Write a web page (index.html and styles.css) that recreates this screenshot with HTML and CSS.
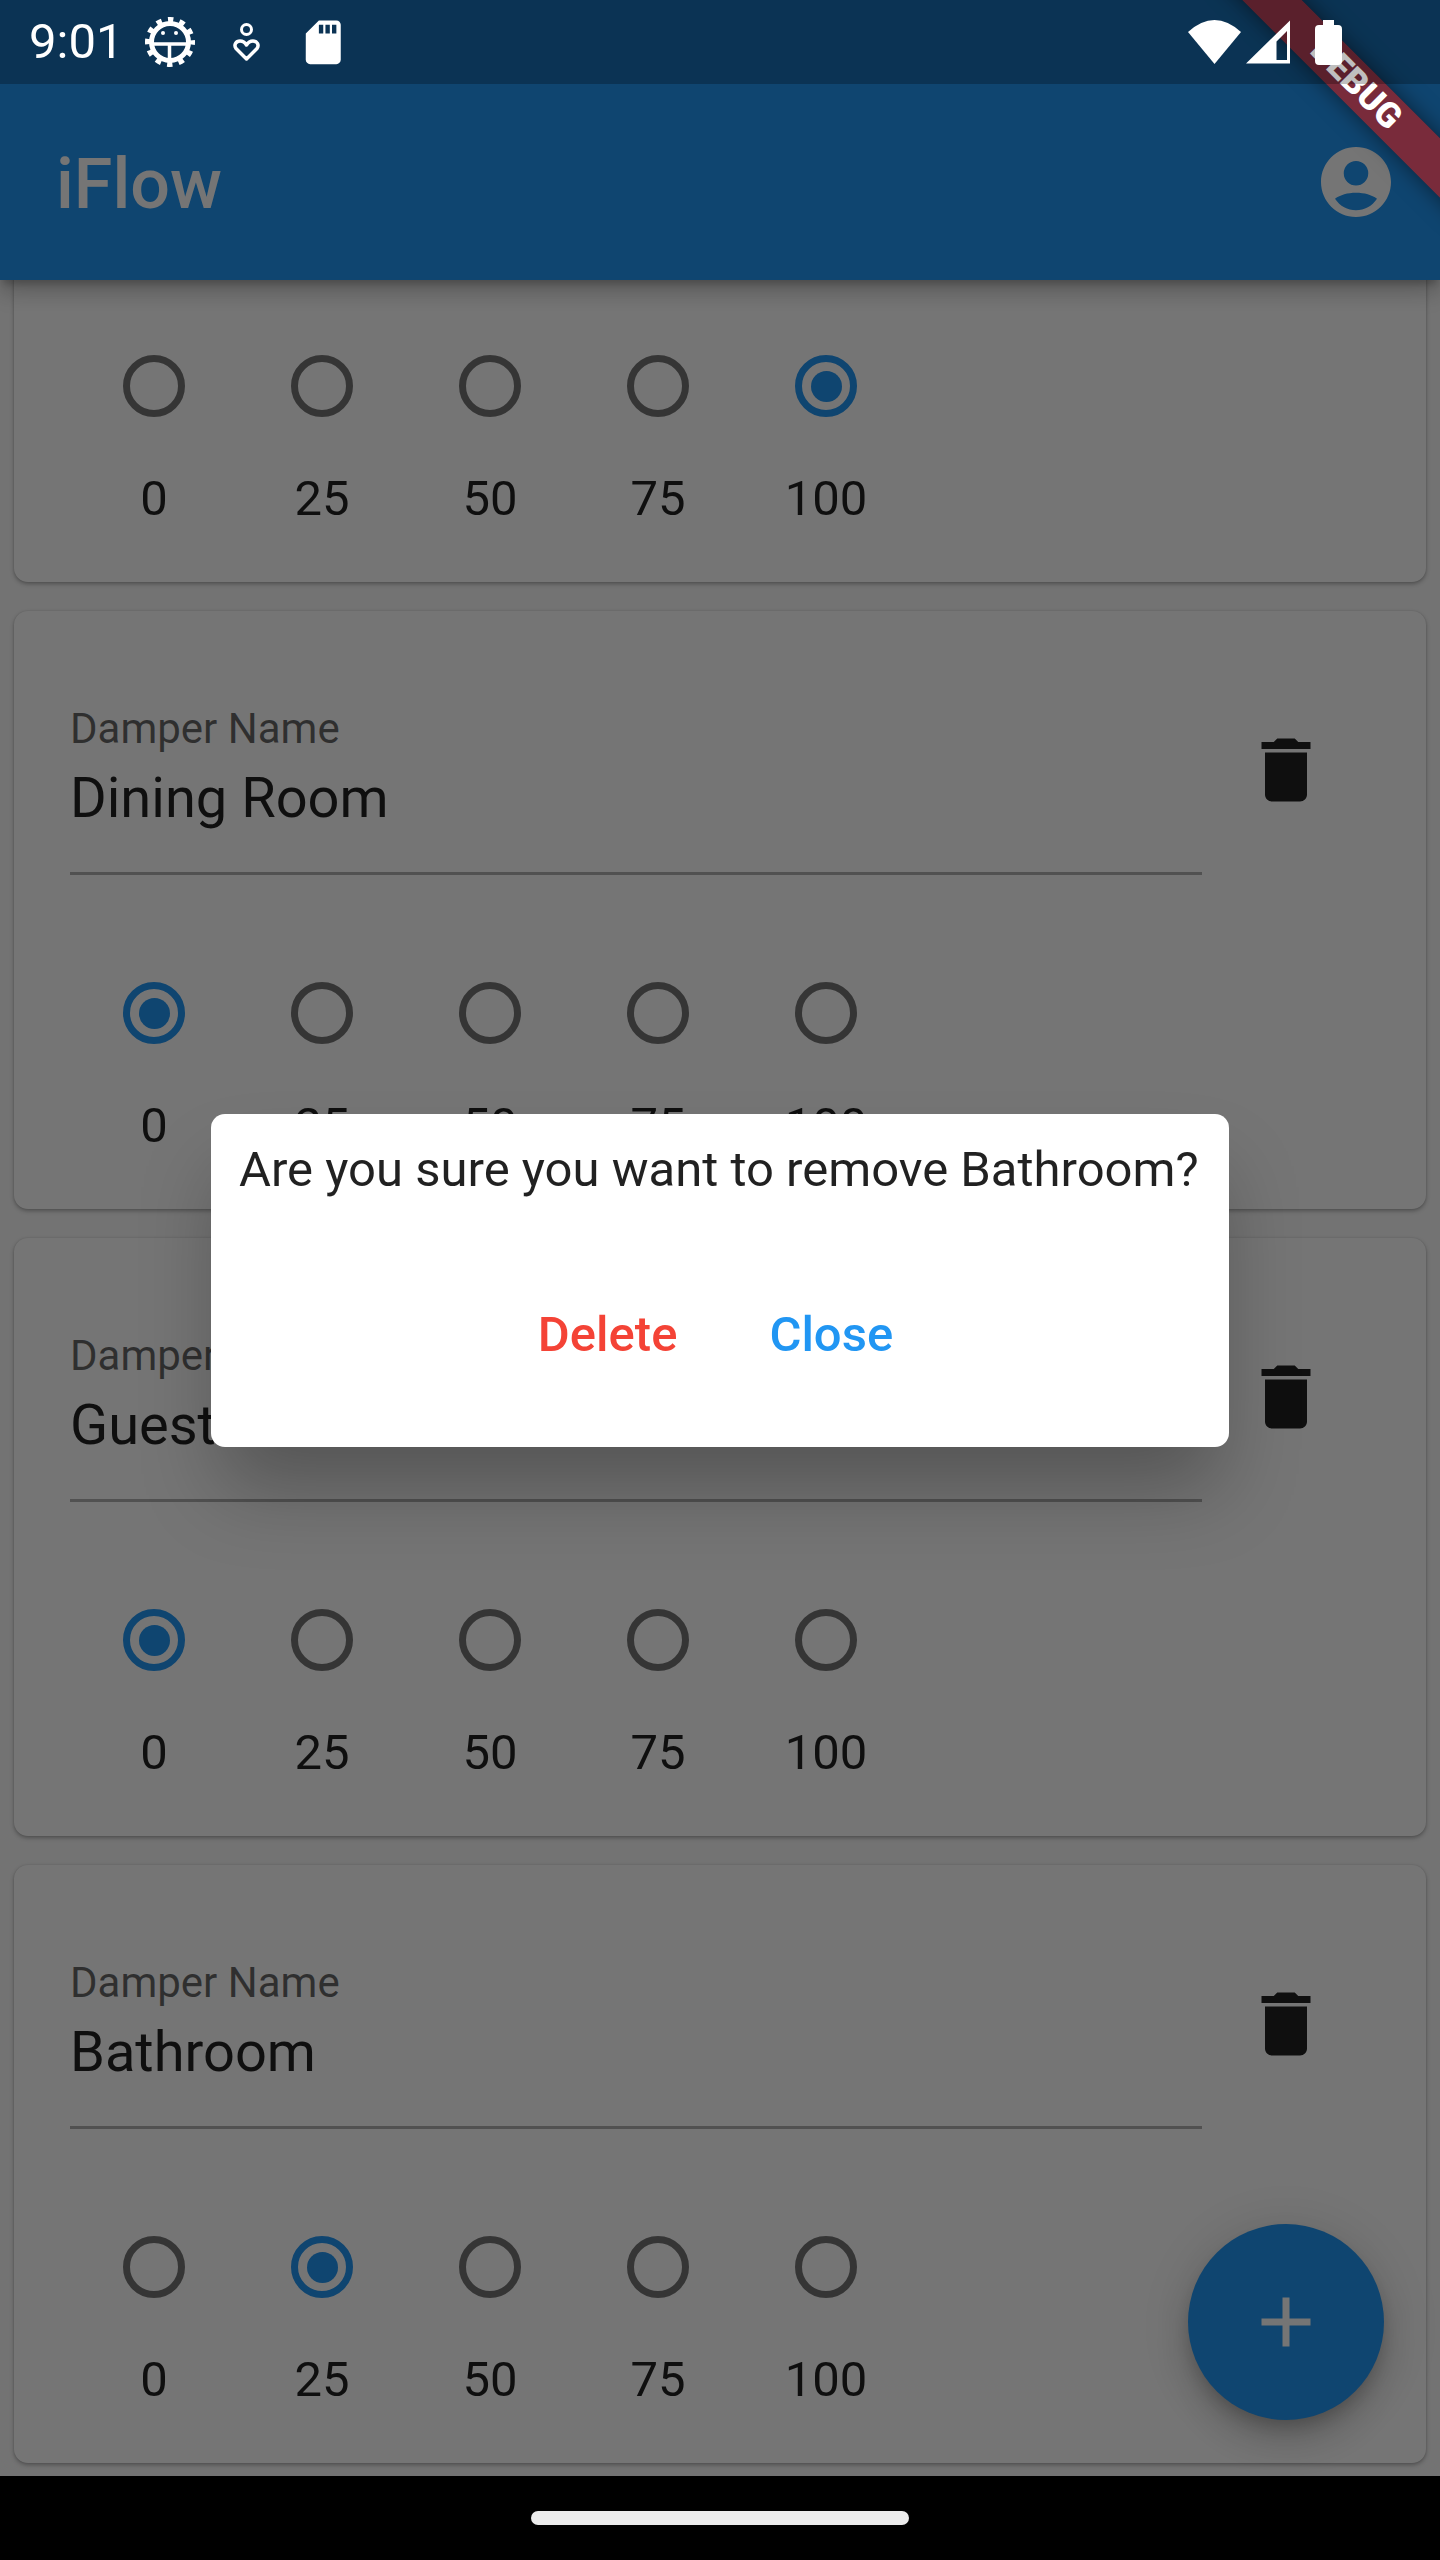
FILE: index.html
```html
<!DOCTYPE html>
<html lang="en">

<head>
    <meta charset="UTF-8">
    <meta name="viewport" content="width=device-width, initial-scale=1.0">
    <title>iFlow</title>
    <link rel="stylesheet" href="styles.css">
</head>

<body>
    <div class="phone">
        <!-- Status bar -->
        <div class="status-bar">
            <div class="status-left">
                <span class="status-time">9:01</span>
                <svg class="icon-gear" width="50" height="50" viewBox="0 0 50 50">
                    <circle cx="25" cy="25" r="18.5" fill="none" stroke="#fff" stroke-width="5" />
                    <circle cx="25" cy="25" r="22.5" fill="none" stroke="#fff" stroke-width="5" stroke-dasharray="5.5 6.28" stroke-dashoffset="2.75" />
                    <path d="M7 27H43M24.5 27V44" fill="none" stroke="#fff" stroke-width="3.5" />
                    <circle cx="18" cy="16" r="2" fill="#fff" />
                    <circle cx="31" cy="16" r="2" fill="#fff" />
                </svg>
                <svg class="icon-person" width="27" height="38" viewBox="0 0 27 38">
                    <circle cx="13.5" cy="6.5" r="5" fill="none" stroke="#fff" stroke-width="3" />
                    <path d="M13.5 36 3 25.5C.5 22 3 18 7 18 10 18 12 19.5 13.5 22 15 19.5 17 18 20 18 24 18 26.5 22 24 25.5Z" fill="none" stroke="#fff" stroke-width="3.5" stroke-linejoin="round" />
                </svg>
                <svg class="icon-sd" width="52.5" height="52.5" viewBox="0 0 24 24">
                    <path fill="#fff" d="M18 2h-8L4.02 8 4 20c0 1.1.9 2 2 2h12c1.1 0 2-.9 2-2V4c0-1.1-.9-2-2-2zm-6 6h-2V4h2v4zm3 0h-2V4h2v4zm3 0h-2V4h2v4z" />
                </svg>
            </div>
            <div class="status-right">
                <svg width="53" height="44" viewBox="0 0 53 44">
                    <path fill="#fff" d="M26.5 44 0 12Q26.5-12 53 12Z" />
                </svg>
                <svg class="icon-signal" width="44.5" height="44" viewBox="0 0 44.5 44">
                    <path fill="#fff" fill-rule="evenodd" d="M0 43.5 44.5 0V43.5ZM30.5 21.5V40H41V11Z" />
                </svg>
                <svg class="icon-battery" width="27" height="45" viewBox="0 0 27 45">
                    <path fill="#fff" d="M8 0H19V5H23Q27 5 27 9V41Q27 45 23 45H4Q0 45 0 41V9Q0 5 4 5H8Z" />
                </svg>
            </div>
        </div>

        <!-- App bar -->
        <header class="app-bar">
            <h1 class="app-title">iFlow</h1>
            <svg class="icon-account" width="84" height="84" viewBox="0 0 24 24">
                <path fill="#fff" fill-rule="evenodd" d="M12 2C6.48 2 2 6.48 2 12s4.48 10 10 10 10-4.48 10-10S17.52 2 12 2zm0 4a3.5 3.5 0 1 1 0 7 3.5 3.5 0 0 1 0-7zM6 16.8c1.5-1.1 3.6-1.7 6-1.7s4.5.6 6 1.7c-1.4 2.1-3.6 3.3-6 3.3s-4.6-1.2-6-3.3z" />
            </svg>
        </header>

        <!-- Damper list -->
        <main class="damper-list">
            <section class="card card-scrolled">
                <div class="radio-row">
                    <div class="option"><span class="radio"></span><span class="option-label">0</span></div>
                    <div class="option"><span class="radio"></span><span class="option-label">25</span></div>
                    <div class="option"><span class="radio"></span><span class="option-label">50</span></div>
                    <div class="option"><span class="radio"></span><span class="option-label">75</span></div>
                    <div class="option"><span class="radio radio-on"></span><span class="option-label">100</span></div>
                </div>
            </section>

            <section class="card">
                <div class="name-row">
                    <div class="field">
                        <div class="field-label">Damper Name</div>
                        <div class="field-value">Dining Room</div>
                    </div>
                    <svg class="icon-trash" width="84" height="84" viewBox="0 0 24 24">
                        <path d="M6 19c0 1.1.9 2 2 2h8c1.1 0 2-.9 2-2V7H6v12zM19 4h-3.5l-1-1h-5l-1 1H5v2h14V4z" />
                    </svg>
                </div>
                <div class="radio-row">
                    <div class="option"><span class="radio radio-on"></span><span class="option-label">0</span></div>
                    <div class="option"><span class="radio"></span><span class="option-label">25</span></div>
                    <div class="option"><span class="radio"></span><span class="option-label">50</span></div>
                    <div class="option"><span class="radio"></span><span class="option-label">75</span></div>
                    <div class="option"><span class="radio"></span><span class="option-label">100</span></div>
                </div>
            </section>

            <section class="card">
                <div class="name-row">
                    <div class="field">
                        <div class="field-label">Damper Name</div>
                        <div class="field-value">Guest Room</div>
                    </div>
                    <svg class="icon-trash" width="84" height="84" viewBox="0 0 24 24">
                        <path d="M6 19c0 1.1.9 2 2 2h8c1.1 0 2-.9 2-2V7H6v12zM19 4h-3.5l-1-1h-5l-1 1H5v2h14V4z" />
                    </svg>
                </div>
                <div class="radio-row">
                    <div class="option"><span class="radio radio-on"></span><span class="option-label">0</span></div>
                    <div class="option"><span class="radio"></span><span class="option-label">25</span></div>
                    <div class="option"><span class="radio"></span><span class="option-label">50</span></div>
                    <div class="option"><span class="radio"></span><span class="option-label">75</span></div>
                    <div class="option"><span class="radio"></span><span class="option-label">100</span></div>
                </div>
            </section>

            <section class="card">
                <div class="name-row">
                    <div class="field">
                        <div class="field-label">Damper Name</div>
                        <div class="field-value">Bathroom</div>
                    </div>
                    <svg class="icon-trash" width="84" height="84" viewBox="0 0 24 24">
                        <path d="M6 19c0 1.1.9 2 2 2h8c1.1 0 2-.9 2-2V7H6v12zM19 4h-3.5l-1-1h-5l-1 1H5v2h14V4z" />
                    </svg>
                </div>
                <div class="radio-row">
                    <div class="option"><span class="radio"></span><span class="option-label">0</span></div>
                    <div class="option"><span class="radio radio-on"></span><span class="option-label">25</span></div>
                    <div class="option"><span class="radio"></span><span class="option-label">50</span></div>
                    <div class="option"><span class="radio"></span><span class="option-label">75</span></div>
                    <div class="option"><span class="radio"></span><span class="option-label">100</span></div>
                </div>
            </section>
        </main>

        <button class="fab" type="button">
            <svg width="84" height="84" viewBox="0 0 24 24">
                <path fill="#fff" d="M19 13h-6v6h-2v-6H5v-2h6V5h2v6h6v2z" />
            </svg>
        </button>

        <!-- Navigation bar -->
        <div class="nav-bar"><span class="home-pill"></span></div>

        <!-- Confirm dialog -->
        <div class="scrim">
            <div class="dialog">
                <p class="dialog-text">Are you sure you want to remove Bathroom?</p>
                <div class="dialog-actions">
                    <button class="btn-text btn-delete" type="button">Delete</button>
                    <button class="btn-text btn-close" type="button">Close</button>
                </div>
            </div>
        </div>

        <div class="debug-banner">DEBUG</div>
    </div>
</body>

</html>
```

FILE: styles.css
```css
/* Reset */
* {
    margin: 0;
    padding: 0;
    box-sizing: border-box;
}

body {
    font-family: 'Roboto', sans-serif;
    background-color: #000;
}

.phone {
    position: relative;
    display: flex;
    flex-direction: column;
    width: 1440px;
    height: 2560px;
    overflow: hidden;
    background-color: #fafafa;
}

/* Status bar */
.status-bar {
    position: absolute;
    top: 0;
    left: 0;
    right: 0;
    z-index: 40;
    display: flex;
    justify-content: space-between;
    align-items: center;
    height: 84px;
    padding: 0 98px 0 29px;
    background-color: rgba(0, 0, 0, 0.25);
    color: #fff;
}

.status-left,
.status-right {
    display: flex;
    align-items: center;
}

.status-time {
    width: 88px;
    font-size: 49px;
    line-height: 84px;
}

.icon-gear {
    margin-left: 28px;
}

.icon-person {
    margin-left: 38px;
}

.icon-sd {
    margin-left: 37px;
}

.icon-signal {
    margin-left: 5px;
}

.icon-battery {
    margin-left: 25px;
}

/* App bar */
.app-bar {
    position: relative;
    z-index: 2;
    display: flex;
    justify-content: space-between;
    align-items: center;
    flex-shrink: 0;
    height: 280px;
    padding: 84px 42px 0 56px;
    background-color: #2196f3;
    box-shadow: 0 7px 7px -3px rgba(0, 0, 0, 0.2), 0 14px 17px rgba(0, 0, 0, 0.14), 0 3px 35px rgba(0, 0, 0, 0.12);
}

.app-title {
    margin-top: 4px;
    color: #fff;
    font-size: 70px;
    font-weight: 500;
}

/* Damper cards */
.damper-list {
    flex: 1;
    min-height: 0;
    padding: 0 14px;
    overflow: hidden;
}

.card {
    height: 598px;
    margin-bottom: 29px;
    padding: 94px 0 0 56px;
    background-color: #fff;
    border-radius: 14px;
    box-shadow: 0 2px 4px rgba(0, 0, 0, 0.3), 0 0 2px rgba(0, 0, 0, 0.12);
}

.card-scrolled {
    height: 316px;
    margin-top: -14px;
    padding-top: 89px;
}

.name-row {
    display: flex;
    align-items: flex-start;
}

.field {
    width: 1132px;
    padding-bottom: 42px;
    border-bottom: 3px solid #b0b0b0;
}

.field-label {
    margin-bottom: 13px;
    color: rgba(0, 0, 0, 0.6);
    font-size: 42px;
    line-height: 48px;
}

.field-value {
    color: rgba(0, 0, 0, 0.87);
    font-size: 56px;
    line-height: 64px;
}

.icon-trash {
    margin: 23px 0 0 42px;
    fill: rgba(0, 0, 0, 0.87);
}

.radio-row {
    display: grid;
    grid-template-columns: repeat(5, 168px);
}

.name-row + .radio-row {
    margin-top: 107px;
}

.option {
    display: flex;
    flex-direction: column;
    align-items: center;
    gap: 54px;
}

.radio {
    display: flex;
    justify-content: center;
    align-items: center;
    width: 62px;
    height: 62px;
    border: 7px solid rgba(0, 0, 0, 0.54);
    border-radius: 50%;
}

.radio-on {
    border-color: #2196f3;
}

.radio-on::after {
    content: "";
    width: 31px;
    height: 31px;
    border-radius: 50%;
    background-color: #2196f3;
}

.option-label {
    color: rgba(0, 0, 0, 0.87);
    font-size: 49px;
    line-height: 56px;
}

/* Floating button */
.fab {
    position: absolute;
    right: 56px;
    bottom: 140px;
    display: flex;
    justify-content: center;
    align-items: center;
    width: 196px;
    height: 196px;
    border: none;
    border-radius: 50%;
    background-color: #2196f3;
    box-shadow: 0 10px 17px -4px rgba(0, 0, 0, 0.2), 0 21px 35px rgba(0, 0, 0, 0.14), 0 4px 63px rgba(0, 0, 0, 0.12);
}

/* Navigation bar */
.nav-bar {
    position: relative;
    z-index: 40;
    display: flex;
    justify-content: center;
    align-items: center;
    flex-shrink: 0;
    height: 84px;
    background-color: #000;
}

.home-pill {
    width: 378px;
    height: 14px;
    border-radius: 7px;
    background-color: #ececec;
}

/* Dialog */
.scrim {
    position: absolute;
    top: 0;
    left: 0;
    right: 0;
    bottom: 0;
    z-index: 20;
    display: flex;
    justify-content: center;
    align-items: center;
    background-color: rgba(0, 0, 0, 0.54);
}

.dialog {
    width: 1018px;
    height: 333px;
    padding: 24px 31px 0 28px;
    background-color: #fff;
    border-radius: 14px;
    box-shadow: 0 50px 80px -10px rgba(0, 0, 0, 0.28);
}

.dialog-text {
    color: rgba(0, 0, 0, 0.87);
    font-size: 49px;
    line-height: 64px;
    text-align: center;
    white-space: nowrap;
}

.dialog-actions {
    display: flex;
    justify-content: center;
    gap: 92px;
    margin-top: 101px;
    padding-right: 6px;
}

.btn-text {
    border: none;
    background: none;
    font-family: inherit;
    font-size: 49px;
    font-weight: 500;
    line-height: 64px;
}

.btn-delete {
    color: #f44336;
}

.btn-close {
    color: #2196f3;
}

/* Debug ribbon */
.debug-banner {
    position: absolute;
    top: 63px;
    left: 1186px;
    z-index: 30;
    width: 340px;
    height: 42px;
    background-color: rgba(183, 28, 28, 0.63);
    box-shadow: 0 0 21px rgba(0, 0, 0, 0.5);
    color: #fff;
    font-size: 35px;
    font-weight: 900;
    line-height: 42px;
    text-align: center;
    transform: rotate(45deg);
}
```
